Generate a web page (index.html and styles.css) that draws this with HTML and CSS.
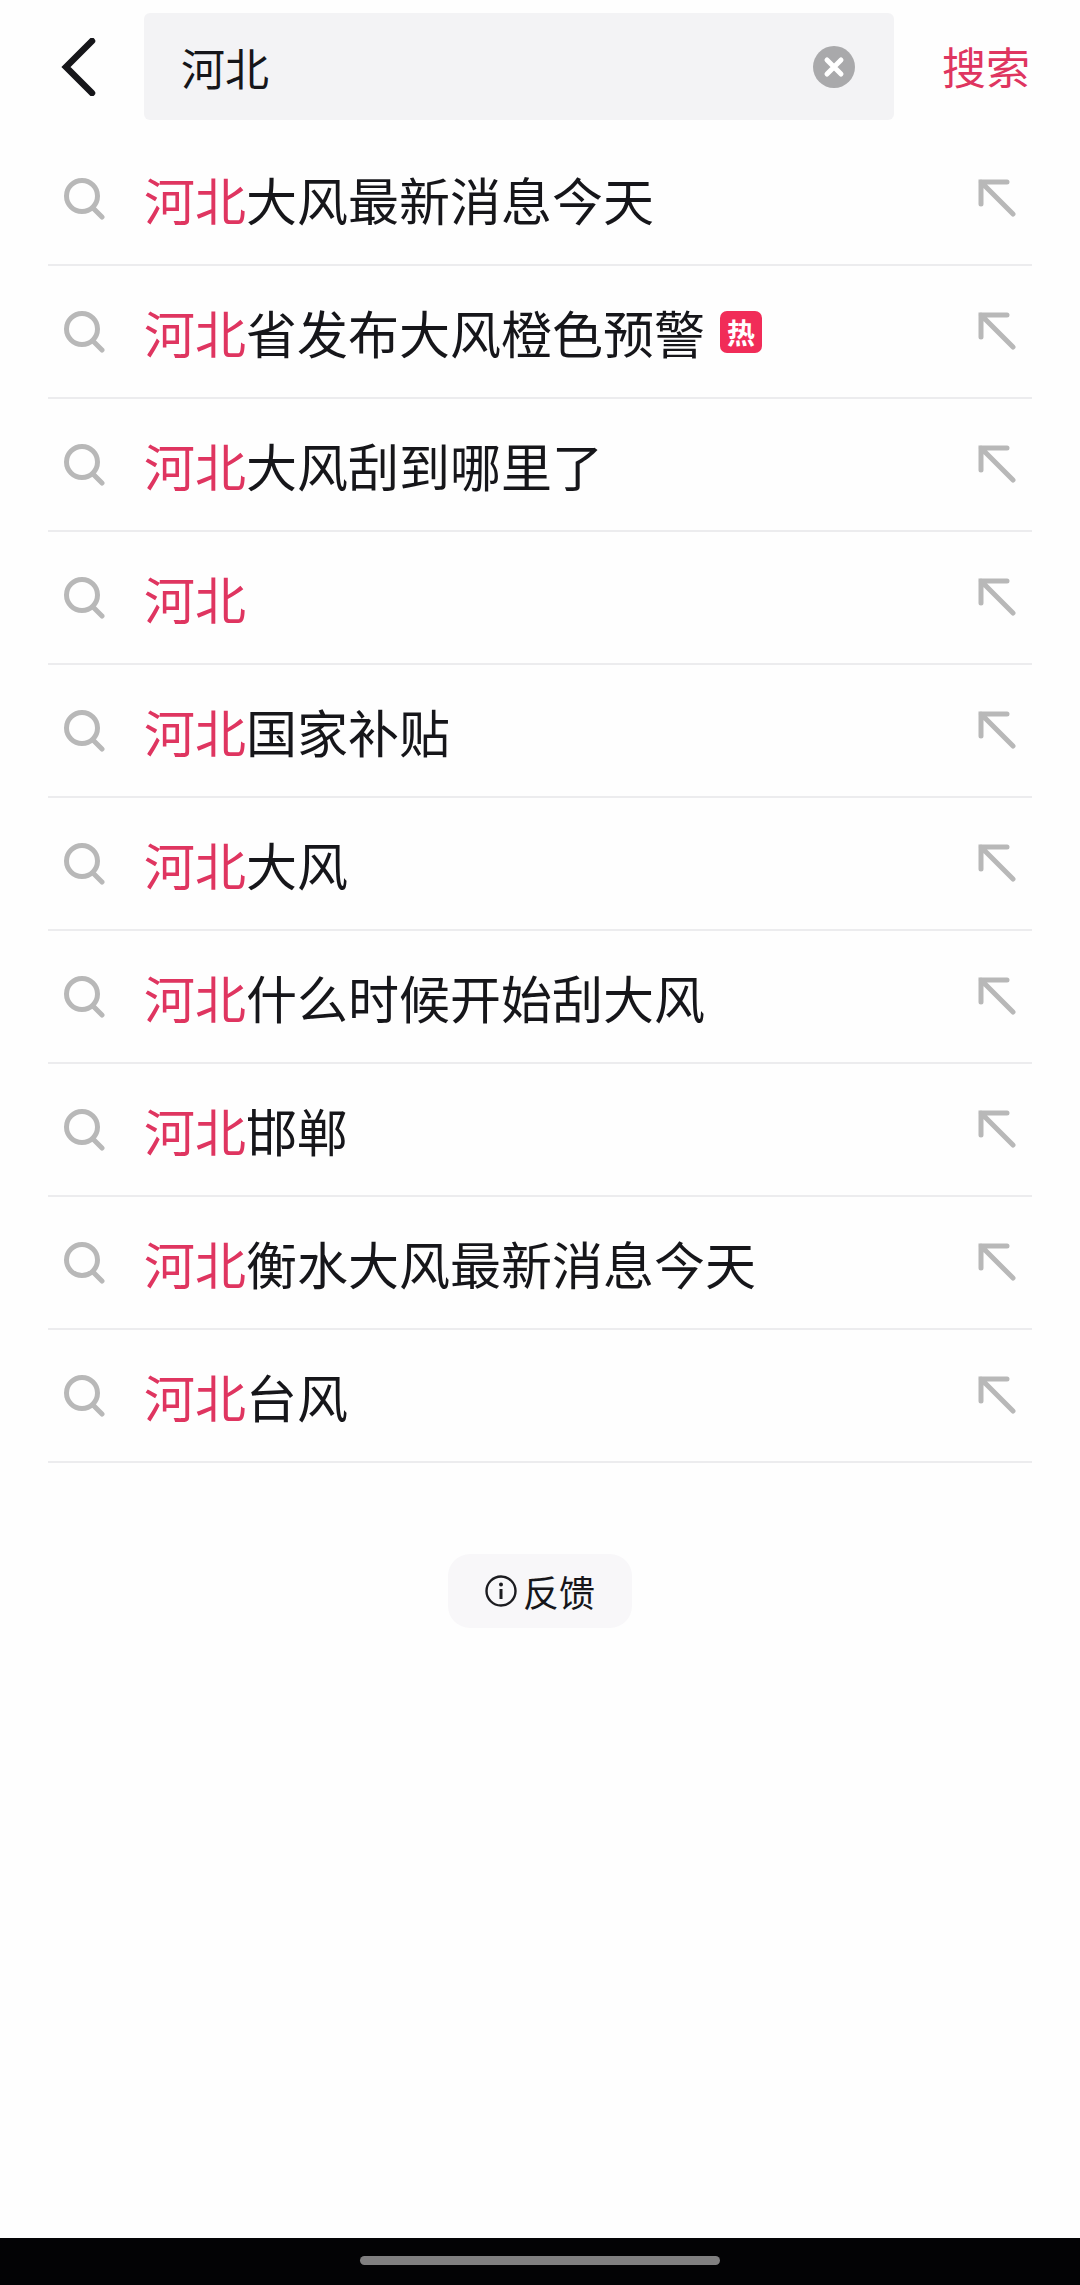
FILE: index.html
```html
<!DOCTYPE html>
<html lang="zh">
<head>
<meta charset="utf-8">
<title>搜索</title>
<link rel="stylesheet" href="styles.css">
</head>
<body>
<svg class="defs" width="0" height="0" aria-hidden="true">
  <symbol id="mag" viewBox="0 0 42 42"><circle cx="19" cy="18" r="15.5" fill="none" stroke="#b8b8b8" stroke-width="5"/><path d="M30 30l9 9" fill="none" stroke="#b8b8b8" stroke-width="5" stroke-linecap="round"/></symbol>
  <symbol id="fill" viewBox="0 0 38 38"><path d="M35 35L3 3M3 25V3h26" fill="none" stroke="#b8b8b8" stroke-width="5" stroke-linecap="round"/></symbol>
</svg>
<div class="app">
  <header class="top">
    <svg class="back" width="36" height="58" viewBox="0 0 36 58"><path d="M31 3L5 29l26 26" fill="none" stroke="#16161a" stroke-width="6.5" stroke-linecap="round" stroke-linejoin="miter"/></svg>
    <div class="box">
      <span class="query">河北</span>
      <svg class="clear" width="42" height="42" viewBox="0 0 42 42"><circle cx="21" cy="21" r="21" fill="#a9a9ab"/><path d="M14 14l14 14M28 14L14 28" stroke="#fff" stroke-width="5" stroke-linecap="round"/></svg>
    </div>
    <span class="go">搜索</span>
  </header>
  <ul class="list">
    <li class="row"><svg class="mag"><use href="#mag"/></svg><span class="text"><em>河北</em>大风最新消息今天</span><svg class="fill"><use href="#fill"/></svg></li>
    <li class="row"><svg class="mag"><use href="#mag"/></svg><span class="text"><em>河北</em>省发布大风橙色预警</span><span class="hot">热</span><svg class="fill"><use href="#fill"/></svg></li>
    <li class="row"><svg class="mag"><use href="#mag"/></svg><span class="text"><em>河北</em>大风刮到哪里了</span><svg class="fill"><use href="#fill"/></svg></li>
    <li class="row"><svg class="mag"><use href="#mag"/></svg><span class="text"><em>河北</em></span><svg class="fill"><use href="#fill"/></svg></li>
    <li class="row"><svg class="mag"><use href="#mag"/></svg><span class="text"><em>河北</em>国家补贴</span><svg class="fill"><use href="#fill"/></svg></li>
    <li class="row"><svg class="mag"><use href="#mag"/></svg><span class="text"><em>河北</em>大风</span><svg class="fill"><use href="#fill"/></svg></li>
    <li class="row"><svg class="mag"><use href="#mag"/></svg><span class="text"><em>河北</em>什么时候开始刮大风</span><svg class="fill"><use href="#fill"/></svg></li>
    <li class="row"><svg class="mag"><use href="#mag"/></svg><span class="text"><em>河北</em>邯郸</span><svg class="fill"><use href="#fill"/></svg></li>
    <li class="row"><svg class="mag"><use href="#mag"/></svg><span class="text"><em>河北</em>衡水大风最新消息今天</span><svg class="fill"><use href="#fill"/></svg></li>
    <li class="row"><svg class="mag"><use href="#mag"/></svg><span class="text"><em>河北</em>台风</span><svg class="fill"><use href="#fill"/></svg></li>
  </ul>
  <div class="fb-wrap">
    <div class="fb">
      <svg width="32" height="32" viewBox="0 0 32 32"><circle cx="16" cy="16" r="14.5" fill="none" stroke="#1c1c20" stroke-width="2.4"/><circle cx="16" cy="9.5" r="2" fill="#1c1c20"/><path d="M16 14v10" stroke="#1c1c20" stroke-width="3"/></svg>
      <span>反馈</span>
    </div>
  </div>
  <div class="nav"><div class="pill"></div></div>
</div>
</body>
</html>
```
FILE: styles.css
```css
* { box-sizing: border-box; }
html, body { margin: 0; padding: 0; }
body { background: #fff; font-family: "Noto Sans CJK SC", "Noto Sans", sans-serif; color: #16161a; }
.defs { position: absolute; }
.app { width: 1080px; height: 2285px; display: flex; flex-direction: column; background: #fefefe; }
.top { height: 133px; padding: 13px 48px 13px 61px; display: flex; align-items: flex-start; }
.back { flex: none; margin-top: 25px; }
.box { flex: none; width: 750px; height: 107px; margin-left: 47px; padding: 0 39px 0 37px; background: #f3f3f5; border-radius: 6px; display: flex; align-items: center; justify-content: space-between; }
.query { font-size: 44px; line-height: 1; }
.go { margin-left: 48px; margin-top: 31px; font-size: 44px; line-height: 1; color: #df3560; white-space: nowrap; }
.list { list-style: none; margin: 0 48px; padding: 0; }
.row { height: 133px; border-bottom: 2px solid #ececee; display: flex; align-items: center; }
.mag { width: 42px; height: 42px; margin-left: 15px; margin-top: 1px; flex: none; }
.text { margin-left: 39px; font-size: 51px; line-height: 1; white-space: nowrap; position: relative; top: 1px; }
.text em { font-style: normal; color: #df3560; }
.hot { width: 42px; height: 42px; margin-left: 15px; border-radius: 7px; background: #f12c58; color: #fff; font-size: 28px; font-weight: 700; line-height: 42px; text-align: center; flex: none; }
.fill { width: 38px; height: 38px; margin-left: auto; margin-right: 16px; margin-top: -1px; flex: none; }
.fb-wrap { display: flex; justify-content: center; padding-top: 91px; }
.fb { width: 184px; height: 74px; border-radius: 22px; background: #f8f7f9; display: flex; align-items: center; justify-content: center; gap: 6px; font-size: 36px; line-height: 1; }
.nav { margin-top: auto; height: 47px; background: #030305; display: flex; justify-content: center; padding-top: 18px; }
.pill { width: 360px; height: 9px; border-radius: 5px; background: #807f80; }
```
